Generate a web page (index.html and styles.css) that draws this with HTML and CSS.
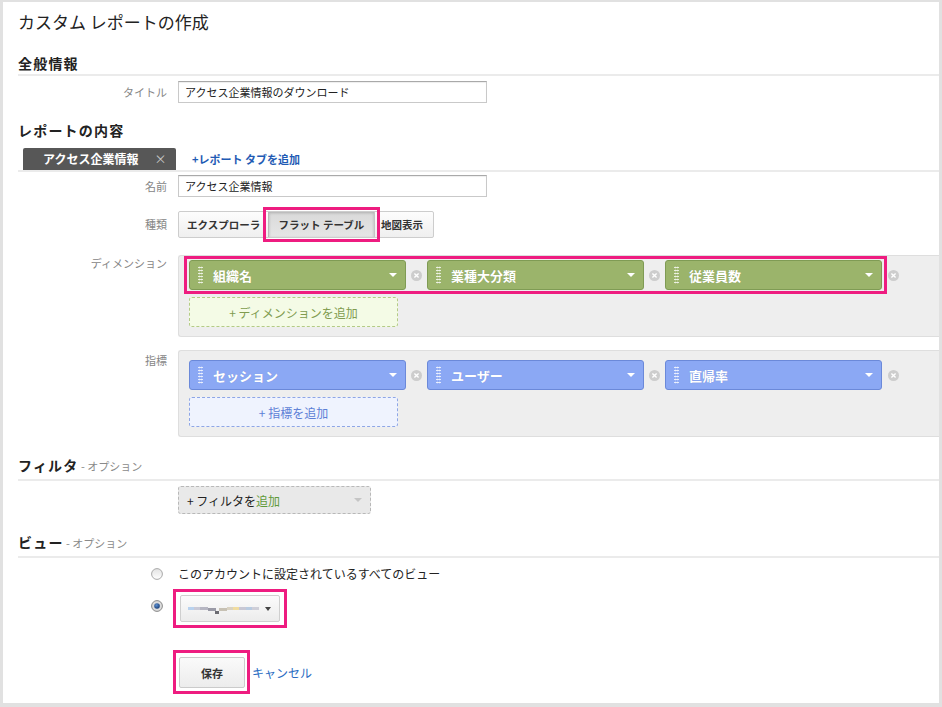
FILE: index.html
```html
<!DOCTYPE html>
<html lang="ja">
<head>
<meta charset="utf-8">
<title>カスタム レポートの作成</title>
<link rel="stylesheet" href="styles.css">
</head>
<body>
<div class="frame">
  <h1 class="page-title">カスタム レポートの作成</h1>

  <h2 class="sec sec-line sec-general">全般情報</h2>
  <div class="row row-title">
    <div class="lbl">タイトル</div>
    <div class="field"><div class="input">アクセス企業情報のダウンロード</div></div>
  </div>

  <h2 class="sec sec-content">レポートの内容</h2>
  <div class="tabbar">
    <div class="tab">アクセス企業情報<span class="tab-x">×</span></div>
    <a class="add-tab">+レポート タブを追加</a>
  </div>

  <div class="row row-name">
    <div class="lbl">名前</div>
    <div class="field"><div class="input">アクセス企業情報</div></div>
  </div>

  <div class="row row-type">
    <div class="lbl">種類</div>
    <div class="field">
      <div class="seg">
        <span class="seg-btn seg-exp">エクスプローラ</span>
        <span class="seg-btn seg-flat">フラット テーブル</span>
        <span class="seg-btn seg-map">地図表示</span>
      </div>
    </div>
  </div>

  <div class="row row-top row-dim">
    <div class="lbl">ディメンション</div>
    <div class="panel panel-dim">
      <div class="chips">
        <div class="chip-group hl">
          <div class="chip chip-g"><span class="handle"></span><span class="chip-name">組織名</span><span class="caret"></span></div>
          <svg class="rm" viewBox="0 0 11 11"><circle cx="5.5" cy="5.5" r="5.5" fill="#cdcdcd"/><path d="M3.4 3.4l4.2 4.2M7.6 3.4l-4.2 4.2" stroke="#fff" stroke-width="1.4"/></svg>
          <div class="chip chip-g"><span class="handle"></span><span class="chip-name">業種大分類</span><span class="caret"></span></div>
          <svg class="rm" viewBox="0 0 11 11"><circle cx="5.5" cy="5.5" r="5.5" fill="#cdcdcd"/><path d="M3.4 3.4l4.2 4.2M7.6 3.4l-4.2 4.2" stroke="#fff" stroke-width="1.4"/></svg>
          <div class="chip chip-g"><span class="handle"></span><span class="chip-name">従業員数</span><span class="caret"></span></div>
        </div>
        <svg class="rm rm-last" viewBox="0 0 11 11"><circle cx="5.5" cy="5.5" r="5.5" fill="#cdcdcd"/><path d="M3.4 3.4l4.2 4.2M7.6 3.4l-4.2 4.2" stroke="#fff" stroke-width="1.4"/></svg>
      </div>
      <div class="add add-dim">+ ディメンションを追加</div>
    </div>
  </div>

  <div class="row row-top row-metric">
    <div class="lbl">指標</div>
    <div class="panel panel-metric">
      <div class="chips">
        <div class="chip-group">
          <div class="chip chip-b"><span class="handle"></span><span class="chip-name">セッション</span><span class="caret"></span></div>
          <svg class="rm" viewBox="0 0 11 11"><circle cx="5.5" cy="5.5" r="5.5" fill="#cdcdcd"/><path d="M3.4 3.4l4.2 4.2M7.6 3.4l-4.2 4.2" stroke="#fff" stroke-width="1.4"/></svg>
          <div class="chip chip-b"><span class="handle"></span><span class="chip-name">ユーザー</span><span class="caret"></span></div>
          <svg class="rm" viewBox="0 0 11 11"><circle cx="5.5" cy="5.5" r="5.5" fill="#cdcdcd"/><path d="M3.4 3.4l4.2 4.2M7.6 3.4l-4.2 4.2" stroke="#fff" stroke-width="1.4"/></svg>
          <div class="chip chip-b"><span class="handle"></span><span class="chip-name">直帰率</span><span class="caret"></span></div>
        </div>
        <svg class="rm rm-last" viewBox="0 0 11 11"><circle cx="5.5" cy="5.5" r="5.5" fill="#cdcdcd"/><path d="M3.4 3.4l4.2 4.2M7.6 3.4l-4.2 4.2" stroke="#fff" stroke-width="1.4"/></svg>
      </div>
      <div class="add add-metric">+ 指標を追加</div>
    </div>
  </div>

  <h2 class="sec sec-line sec-filter">フィルタ<span class="opt"> - オプション</span></h2>
  <div class="filter-btn"><span class="filter-text">+ フィルタを<span class="green">追加</span></span><span class="caret caret-light"></span></div>

  <h2 class="sec sec-line sec-view">ビュー<span class="opt"> - オプション</span></h2>
  <div class="radio-row radio-all">
    <svg class="radio" viewBox="0 0 12 12"><defs><linearGradient id="rgu" x1="0" y1="0" x2="0" y2="1"><stop offset="0" stop-color="#e2e2e2"/><stop offset="1" stop-color="#ffffff"/></linearGradient></defs><circle cx="6" cy="6" r="5.4" fill="url(#rgu)" stroke="#a9a9a9" stroke-width="1"/></svg>
    <span class="radio-text">このアカウントに設定されているすべてのビュー</span>
  </div>
  <div class="radio-row radio-one">
    <svg class="radio radio-checked" viewBox="0 0 12 12"><defs><radialGradient id="rgc" cx="0.4" cy="0.35" r="0.7"><stop offset="0" stop-color="#5c8fd0"/><stop offset="1" stop-color="#153a73"/></radialGradient></defs><circle cx="6" cy="6" r="5.4" fill="#dcdcdc" stroke="#8a8a8a" stroke-width="1"/><circle cx="6" cy="6" r="2.8" fill="url(#rgc)"/></svg>
    <div class="pink-box pink-view">
      <div class="view-select">
        <svg class="blur" viewBox="0 0 76 12" width="76" height="12">
          <rect x="0" y="4" width="6" height="3" fill="#b9d2ee"/>
          <rect x="6" y="4" width="6" height="3" fill="#c9c9d6"/>
          <rect x="12" y="4" width="8" height="3" fill="#b6b6c2"/>
          <rect x="20" y="5" width="8" height="3" fill="#9a9aa6"/>
          <rect x="27" y="8" width="4" height="3" fill="#6c6c72"/>
          <rect x="31" y="5" width="8" height="3" fill="#c7c1b4"/>
          <rect x="39" y="4" width="6" height="3" fill="#d9d2c2"/>
          <rect x="45" y="4" width="6" height="3" fill="#f0dca0"/>
          <rect x="51" y="4" width="7" height="3" fill="#c8c8d4"/>
          <rect x="58" y="4" width="6" height="3" fill="#b9cbe0"/>
          <rect x="64" y="4" width="7" height="3" fill="#cfcfd8"/>
        </svg>
        <span class="caret caret-dark"></span>
      </div>
    </div>
  </div>

  <div class="actions">
    <div class="pink-box pink-save"><span class="save-btn">保存</span></div>
    <a class="cancel">キャンセル</a>
  </div>
</div>
</body>
</html>
```
FILE: styles.css
```css
* { box-sizing: border-box; }
html, body { margin: 0; padding: 0; background: #fff; }
body {
  font-family: "Noto Sans CJK JP", "Noto Sans", sans-serif;
  color: #222;
}

.frame {
  width: 942px;
  height: 707px;
  border-style: solid;
  border-color: #e1e1e1;
  border-width: 2px 3px 4px 3px;
  padding-left: 15px;
  overflow: hidden;
}

.page-title {
  margin: 10px 0 0;
  font-size: 17px;
  line-height: 20px;
  font-weight: normal;
  color: #222;
}

.sec {
  margin: 0;
  font-size: 14px;
  line-height: 18px;
  font-weight: bold;
  letter-spacing: 1.2px;
  color: #222;
}
.sec-line { border-bottom: 2px solid #ebebeb; }
.sec-general { margin-top: 22px; padding-bottom: 2px; }
.sec-content { margin-top: 18px; }
.sec-filter { margin-top: 19px; padding-bottom: 4px; }
.sec-view { margin-top: 19px; padding-bottom: 4px; }
.opt {
  font-size: 11px;
  font-weight: normal;
  color: #8a8a8a;
  letter-spacing: 0;
}

.row {
  display: grid;
  grid-template-columns: 149px 1fr;
  column-gap: 11px;
  align-items: center;
}
.row-top { align-items: start; }
.lbl {
  text-align: right;
  font-size: 11px;
  line-height: 16px;
  color: #858585;
}
.row-title { margin-top: 5px; }
.row-name { margin-top: 3px; }
.row-type { margin-top: 13px; }
.row-dim { margin-top: 17px; }
.row-metric { margin-top: 13px; }
.row-metric .lbl { padding-top: 2px; }

.input {
  width: 309px;
  height: 22px;
  border: 1px solid #c9c9c9;
  border-top-color: #a9a9a9;
  padding-left: 6px;
  font-size: 11px;
  line-height: 20px;
  color: #222;
  box-shadow: inset 0 1px 1px rgba(0,0,0,0.07);
}

.tabbar {
  margin-top: 9px;
  display: flex;
  align-items: center;
  border-bottom: 2px solid #ebebeb;
}
.tab {
  margin-left: 5px;
  width: 153px;
  height: 22px;
  background: #575757;
  color: #fff;
  font-weight: bold;
  font-size: 12px;
  line-height: 22px;
  padding-left: 20px;
  border-radius: 2px 2px 0 0;
  display: flex;
}
.tab-x {
  margin-left: 16px;
  color: #c8c8c8;
  font-weight: normal;
  font-size: 12px;
}
.add-tab {
  margin-left: 16px;
  color: #1f5bb4;
  font-weight: bold;
  font-size: 11px;
}

.seg {
  display: inline-flex;
  height: 27px;
  border: 1px solid #cdcdcd;
  border-radius: 2px;
  background: linear-gradient(#fdfdfd, #efefef);
}
.seg-btn {
  display: flex;
  align-items: center;
  font-size: 10.5px;
  font-weight: bold;
  color: #333;
  white-space: nowrap;
}
.seg-exp { width: 89px; padding-left: 8px; overflow: hidden; }
.seg-flat {
  width: 107px;
  justify-content: center;
  background: linear-gradient(#d9d9d9, #e6e6e6);
  border-left: 1px solid #b9b9b9;
  border-right: 1px solid #c4c4c4;
  box-shadow: inset 0 1px 3px rgba(0,0,0,0.2);
  outline: 3px solid #ee1c80;
  outline-offset: 2px;
}
.seg-map { width: 58px; padding-left: 6px; }

.panel {
  background: #eeeeee;
  border: 1px solid #dedede;
  border-right: none;
  border-radius: 3px 0 0 3px;
  padding: 0 0 9px 5px;
}
.panel-metric { padding-top: 5px; }

.chips {
  display: flex;
  align-items: center;
}
.chip-group {
  display: flex;
  align-items: center;
  border: 3px solid transparent;
  padding: 1px 2px;
}
.chip-group.hl { border-color: #ee1c80; }

.chip {
  width: 217px;
  height: 30px;
  display: flex;
  align-items: center;
  border-radius: 3px;
  padding: 0 8px;
  color: #fff;
  font-weight: bold;
  font-size: 13px;
  text-shadow: 0 0 1px rgba(0,0,0,0.15);
}
.chip-g { background: #9bb46b; border: 1px solid #7f9b54; }
.chip-b { background: #8ba8f4; border: 1px solid #6b89d9; }
.handle {
  width: 5px;
  height: 18px;
  margin-right: 10px;
  background-image: radial-gradient(circle, rgba(255,255,255,0.85) 0.8px, transparent 1.1px);
  background-size: 2.5px 3px;
}
.chip-name { flex: 1; }
.caret {
  width: 0;
  height: 0;
  border-left: 4px solid transparent;
  border-right: 4px solid transparent;
  border-top: 4px solid #fff;
}
.rm {
  width: 11px;
  height: 11px;
  margin: 0 5px;
  flex: none;
}
.rm-last { margin-left: 1px; }

.add {
  margin: 3px 0 0 5px;
  width: 209px;
  height: 30px;
  border-radius: 3px;
  display: flex;
  align-items: center;
  justify-content: center;
  font-size: 12px;
}
.add-dim {
  background: #f4fbe6;
  border: 1px dashed #b4cb86;
  color: #809c4f;
}
.add-metric {
  background: #eff3fe;
  border: 1px dashed #8ea6e6;
  color: #5d7fd6;
}

.filter-btn {
  margin: 5px 0 0 160px;
  width: 193px;
  height: 28px;
  border: 1px dashed #b8b8b8;
  border-radius: 3px;
  background: #e9e9e9;
  display: flex;
  align-items: center;
  padding: 0 8px 0 8px;
  font-size: 12px;
  color: #222;
}
.filter-text { flex: 1; }
.green { color: #5f9a3a; }
.caret-light { border-top-color: #c5c5c5; }

.radio-row {
  display: flex;
  align-items: center;
  margin-left: 133px;
}
.radio { width: 12px; height: 12px; flex: none; }
.radio-all { margin-top: 7px; height: 18px; gap: 15px; }
.radio-text { font-size: 12px; line-height: 18px; color: #222; }
.radio-one { margin-top: 6px; gap: 10px; }
.radio-checked { margin-bottom: 6px; }

.pink-box {
  border: 3px solid #ee1c80;
}
.pink-view { padding: 3px 4px 3px 4px; }
.view-select {
  width: 100px;
  height: 27px;
  border: 1px solid #cfcfcf;
  border-radius: 2px;
  background: linear-gradient(#fbfbfb, #ececec);
  display: flex;
  align-items: center;
  padding: 0 8px 0 7px;
  justify-content: space-between;
}
.blur { filter: blur(0.6px); }
.caret-dark { border-top-color: #444; border-left-width: 3.5px; border-right-width: 3.5px; }

.actions {
  margin: 22px 0 0 155px;
  display: flex;
  align-items: center;
}
.pink-save { padding: 4px 2px 3px 3px; }
.save-btn {
  display: flex;
  align-items: center;
  justify-content: center;
  width: 66px;
  height: 31px;
  border: 1px solid #cbcbcb;
  border-radius: 2px;
  background: linear-gradient(#fafafa, #ececec);
  font-size: 11px;
  font-weight: bold;
  color: #333;
}
.cancel {
  margin-left: 2px;
  font-size: 12px;
  color: #2a6cc2;
}
```
